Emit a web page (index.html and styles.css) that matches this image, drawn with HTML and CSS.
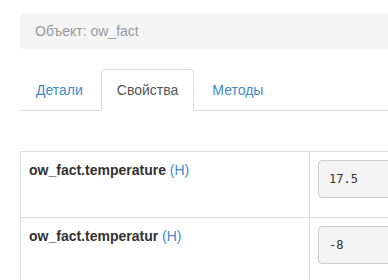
FILE: index.html
```
<!DOCTYPE html>
<html lang="ru">
<head>
    <meta charset="UTF-8">
    <title>Объект: ow_fact</title>
    <link rel="stylesheet" href="styles.css">
</head>
<body>
    <div class="container">
        <div class="breadcrumb">Объект: ow_fact</div>

        <ul class="nav-tabs">
            <li><a href="#">Детали</a></li>
            <li class="active"><a href="#">Свойства</a></li>
            <li><a href="#">Методы</a></li>
        </ul>

        <div class="tab-content">
            <table class="table" cellpadding="0" cellspacing="0">
                <tbody>
                    <tr>
                        <td class="prop-name"><b>ow_fact.temperature</b> <span class="prop-type">(H)</span></td>
                        <td><input class="form-control" type="text" value="17.5" readonly></td>
                    </tr>
                    <tr>
                        <td class="prop-name"><b>ow_fact.temperatur</b> <span class="prop-type">(H)</span></td>
                        <td><input class="form-control" type="text" value="-8" readonly></td>
                    </tr>
                </tbody>
            </table>
        </div>
    </div>
</body>
</html>
```
FILE: styles.css
```
body {
	margin: 0;
	font-family: "Liberation Sans", Arial, sans-serif;
	font-size: 14px;
	line-height: 20px;
	color: #333;
	background: #fff;
	overflow: hidden;
}

.container {
	width: 700px;
	padding: 13px 0 0 20px;
}

.breadcrumb {
	background-color: #f5f5f5;
	border-radius: 4px;
	padding: 8px 15px;
	color: #999;
	margin-bottom: 20px;
}

.nav-tabs {
	display: flex;
	list-style: none;
	margin: 0;
	padding: 0;
	border-bottom: 1px solid #ddd;
}

.nav-tabs li {
	margin-right: 2px;
	margin-bottom: -1px;
}

.nav-tabs li a {
	display: block;
	padding: 10px 15px;
	border: 1px solid transparent;
	border-radius: 4px 4px 0 0;
	color: #428bca;
	text-decoration: none;
}

.nav-tabs li.active a {
	color: #555;
	background-color: #fff;
	border-color: #ddd #ddd transparent;
}

.tab-content {
	padding-top: 40px;
}

.table {
	width: 100%;
	border-collapse: collapse;
	border: 1px solid #ddd;
}

.table td {
	border: 1px solid #ddd;
	padding: 8px;
	vertical-align: top;
}

.table td.prop-name {
	width: 272px;
}

.prop-type {
	color: #428bca;
}

.form-control {
	display: block;
	box-sizing: border-box;
	width: 100%;
	height: 38px;
	margin-bottom: 11px;
	padding: 6px 10px;
	font-family: "DejaVu Sans Mono", monospace;
	font-size: 12px;
	color: #333;
	background-color: #f3f3f3;
	border: 1px solid #ccc;
	border-radius: 4px;
}
```
